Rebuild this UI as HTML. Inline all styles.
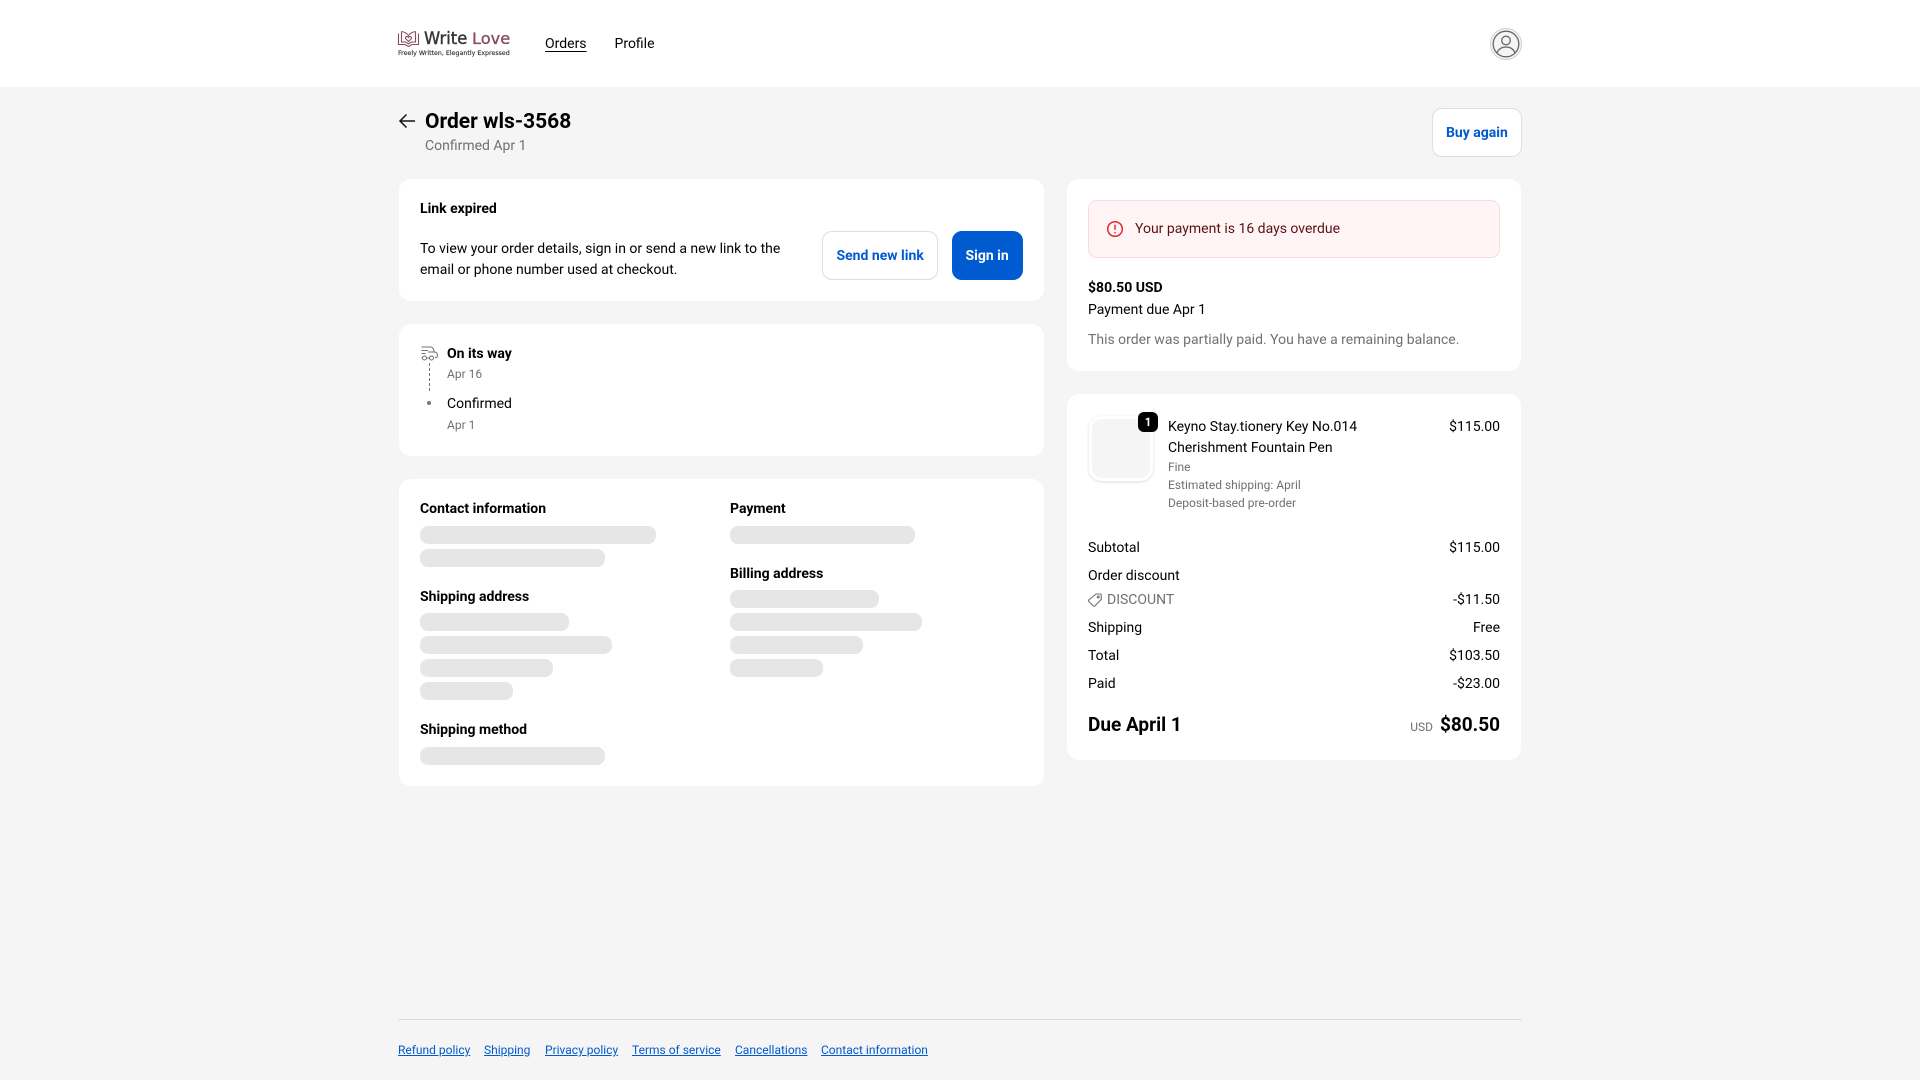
<!DOCTYPE html>
<html lang="en"><head><meta charset="utf-8"><title>Order wls-3568</title>
<style>
*{box-sizing:border-box}
html,body{margin:0;padding:0}
body{width:1920px;height:1080px;overflow:hidden;background:#f5f5f5;position:relative;font-family:Roboto,"Liberation Sans",Arial,sans-serif;font-size:14px;color:#000}
.a{position:absolute}
.t{position:absolute;white-space:nowrap;line-height:20px;height:20px;margin-top:1px}
.r{text-align:right;right:420px}
.b{font-weight:700}
.g{color:#707070}
.s{font-size:12px;margin-top:0}
.card{position:absolute;background:#fff;border-radius:12px}
.sk{position:absolute;height:18px;background:#e6e6e6;border-radius:8px}
.btn{position:absolute;border-radius:10px;border:1px solid #dedede;background:#fff}
.blue{color:#005bd1}
a{color:#005bd1;text-decoration:underline}
</style></head><body>
<div class="a" style="left:0;top:0;width:1920px;height:87px;background:#fff"></div>

<svg class="a" style="left:397px;top:30px" width="24" height="19" viewBox="0 0 24 19" fill="none" stroke="#8a4b5c" stroke-width="1.100"><path d="M1.500 3.500V14.500H8l3.500 2 3.500-2h6.500V3.500"/><path d="M4.500 1.500V12H8.500l3 1.800 3-1.800h4V1.500"/><path d="M4.500 1.500C7.500 2 10 3.200 11.500 5.500 13 3.200 15.500 2 18.500 1.500"/><path d="M11.500 11.500 8.800 8.800c-1.300-1.800 1.500-3.400 2.700-1.300 1.200-2.100 4-.5 2.700 1.300z"/></svg>
<div class="t" style="left:424px;top:28px;font-size:16.400px;color:#363636;-webkit-text-stroke:.4px #363636;font-family:'DejaVu Sans',sans-serif">Write</div>
<div class="t" style="left:472px;top:28px;font-size:16.200px;color:#8a4b5c;-webkit-text-stroke:.35px #8a4b5c;font-family:'DejaVu Sans',sans-serif">Love</div>
<div class="t" style="left:398px;top:43px;font-size:6.300px;color:#333;-webkit-text-stroke:.15px #333;font-family:'DejaVu Sans',sans-serif">Freely Written, Elegantly Expressed</div>

<div class="t" style="left:545px;top:33px;text-decoration:underline;text-underline-offset:3px">Orders</div>
<div class="t" style="left:614.500px;top:33px">Profile</div>

<svg class="a" style="left:1489px;top:26.500px" width="34" height="34" viewBox="0 0 34 34" fill="none"><circle cx="17" cy="17" r="15.500" fill="#f5f5f5" stroke="#cfcfcf" stroke-width="1"/><circle cx="17" cy="17" r="12.800" stroke="#666" stroke-width="1.300"/><circle cx="17" cy="13.500" r="4.300" stroke="#666" stroke-width="1.300"/><path d="M8 26c1.500-4 5-6 9-6s7.500 2 9 6" stroke="#666" stroke-width="1.300"/></svg>

<svg class="a" style="left:398px;top:113px" width="18" height="16" viewBox="0 0 18 16" fill="none" stroke="#111" stroke-width="1.500"><path d="M17 8H2M8.500 1.500 2 8l6.500 6.500"/></svg>
<div class="t b" style="left:425px;top:110px;font-size:21px;line-height:22px;height:22px">Order wls-3568</div>
<div class="t g" style="left:425px;top:135px">Confirmed Apr 1</div>
<div class="btn" style="left:1432px;top:108px;width:90px;height:49px"></div>
<div class="t b blue" style="left:1446px;top:122px">Buy again</div>

<!-- Link expired -->
<div class="card" style="left:399px;top:179px;width:645px;height:122px"></div>
<div class="t b" style="left:420px;top:198px">Link expired</div>
<div class="t" style="left:420px;top:238px">To view your order details, sign in or send a new link to the</div>
<div class="t" style="left:420px;top:259px">email or phone number used at checkout.</div>
<div class="btn" style="left:822px;top:231px;width:116px;height:49px"></div>
<div class="t b blue" style="left:836.500px;top:245px">Send new link</div>
<div class="btn" style="left:952px;top:231px;width:71px;height:49px;background:#005bd1;border-color:#005bd1"></div>
<div class="t b" style="left:965.500px;top:245px;color:#fff">Sign in</div>

<!-- Timeline -->
<div class="card" style="left:399px;top:324px;width:645px;height:132px"></div>
<svg class="a" style="left:419.500px;top:345px" width="20" height="50" viewBox="0 0 20 50" fill="none" stroke="#707070" stroke-width="1"><path d="M1.500 2h9.500c1 0 1.500.5 2 1.500l1.500 3.500c1.800.3 3 1.300 3 3 0 2-1 2.700-2.500 2.700"/><path d="M1.500 5.500h6.500M1.500 8.500h4M14 7H8"/><path d="M1.500 12.700h.7"/><circle cx="4.500" cy="13" r="2"/><circle cx="11.500" cy="13" r="2"/><path d="M6.500 13h3"/><path d="M9.500 18v30" stroke-dasharray="3 2"/></svg>
<div class="a" style="left:427px;top:401px;width:4px;height:4px;border-radius:50%;background:#777"></div>
<div class="t b" style="left:447px;top:343px">On its way</div>
<div class="t g s" style="left:447px;top:364px">Apr 16</div>
<div class="t" style="left:447px;top:393px">Confirmed</div>
<div class="t g s" style="left:447px;top:415px">Apr 1</div>

<!-- Info -->
<div class="card" style="left:399px;top:479px;width:645px;height:307px"></div>
<div class="t b" style="left:420px;top:498px">Contact information</div>
<div class="sk" style="left:420px;top:526px;width:236px"></div>
<div class="sk" style="left:420px;top:549px;width:185px"></div>
<div class="t b" style="left:420px;top:586px">Shipping address</div>
<div class="sk" style="left:420px;top:613px;width:149px"></div>
<div class="sk" style="left:420px;top:636px;width:192px"></div>
<div class="sk" style="left:420px;top:659px;width:133px"></div>
<div class="sk" style="left:420px;top:682px;width:93px"></div>
<div class="t b" style="left:420px;top:719px">Shipping method</div>
<div class="sk" style="left:420px;top:747px;width:185px"></div>
<div class="t b" style="left:730px;top:498px">Payment</div>
<div class="sk" style="left:730px;top:526px;width:185px"></div>
<div class="t b" style="left:730px;top:563px">Billing address</div>
<div class="sk" style="left:730px;top:590px;width:149px"></div>
<div class="sk" style="left:730px;top:613px;width:192px"></div>
<div class="sk" style="left:730px;top:636px;width:133px"></div>
<div class="sk" style="left:730px;top:659px;width:93px"></div>

<!-- Payment -->
<div class="card" style="left:1067px;top:179px;width:454px;height:192px"></div>
<div class="a" style="left:1088px;top:200px;width:412px;height:58px;background:#fff5f6;border:1px solid #fbd9dc;border-radius:9px"></div>
<svg class="a" style="left:1106px;top:220px" width="18" height="18" viewBox="0 0 18 18" fill="none" stroke="#e02b2b" stroke-width="1.500"><circle cx="9" cy="9" r="7.300"/><path d="M9 4.800v5M9 12v1.300"/></svg>
<div class="t" style="left:1135px;top:218px;color:#5b0f12">Your payment is 16 days overdue</div>
<div class="t b" style="left:1088px;top:277px">$80.50 USD</div>
<div class="t" style="left:1088px;top:299px">Payment due Apr 1</div>
<div class="t g" style="left:1088px;top:329px">This order was partially paid. You have a remaining balance.</div>

<!-- Summary -->
<div class="card" style="left:1067px;top:394px;width:454px;height:366px"></div>
<div class="a" style="left:1089px;top:416px;width:64px;height:65px;border-radius:13px;background:#f5f5f5;border:3px solid #fff;box-shadow:0 1px 3px 0 #dcdcdc"></div>
<div class="a" style="left:1138px;top:412px;width:20px;height:20px;border-radius:6px;background:#000;color:#fff;font-size:11.500px;font-weight:700;line-height:20px;text-align:center">1</div>
<div class="t" style="left:1168px;top:416px">Keyno Stay.tionery Key No.014</div>
<div class="t" style="left:1168px;top:437px">Cherishment Fountain Pen</div>
<div class="t g s" style="left:1168px;top:457px">Fine</div>
<div class="t g s" style="left:1168px;top:475px">Estimated shipping: April</div>
<div class="t g s" style="left:1168px;top:493px">Deposit-based pre-order</div>
<div class="t r" style="top:416px">$115.00</div>

<div class="t" style="left:1088px;top:537px">Subtotal</div><div class="t r" style="top:537px">$115.00</div>
<div class="t" style="left:1088px;top:565px">Order discount</div>
<svg class="a" style="left:1087px;top:592px" width="16" height="16" viewBox="0 0 16 16" fill="none" stroke="#707070" stroke-width="1.100"><path d="M9 2h4.500a.8.8 0 0 1 .8.8V7.300L7.800 14a1 1 0 0 1-1.400 0L1.800 9.400a1 1 0 0 1 0-1.400z"/><circle cx="11.300" cy="5" r=".9"/></svg>
<div class="t g" style="left:1107px;top:589px">DISCOUNT</div><div class="t r" style="top:589px">-$11.50</div>
<div class="t" style="left:1088px;top:617px">Shipping</div><div class="t r" style="top:617px">Free</div>
<div class="t" style="left:1088px;top:645px">Total</div><div class="t r" style="top:645px">$103.50</div>
<div class="t" style="left:1088px;top:673px">Paid</div><div class="t r" style="top:673px">-$23.00</div>
<div class="t b" style="left:1088px;top:714px;font-size:19px">Due April 1</div>
<div class="t g s" style="right:487px;top:717px">USD</div>
<div class="t b r" style="top:714px;font-size:19px">$80.50</div>

<!-- Footer -->
<div class="a" style="left:398px;top:1019px;width:1124px;height:1px;background:#dcdcdc"></div>
<div class="t s" style="left:398px;top:1040px"><a href="#">Refund policy</a></div>
<div class="t s" style="left:484px;top:1040px"><a href="#">Shipping</a></div>
<div class="t s" style="left:545px;top:1040px"><a href="#">Privacy policy</a></div>
<div class="t s" style="left:632px;top:1040px"><a href="#">Terms of service</a></div>
<div class="t s" style="left:735px;top:1040px"><a href="#">Cancellations</a></div>
<div class="t s" style="left:821px;top:1040px"><a href="#">Contact information</a></div>
</body></html>
